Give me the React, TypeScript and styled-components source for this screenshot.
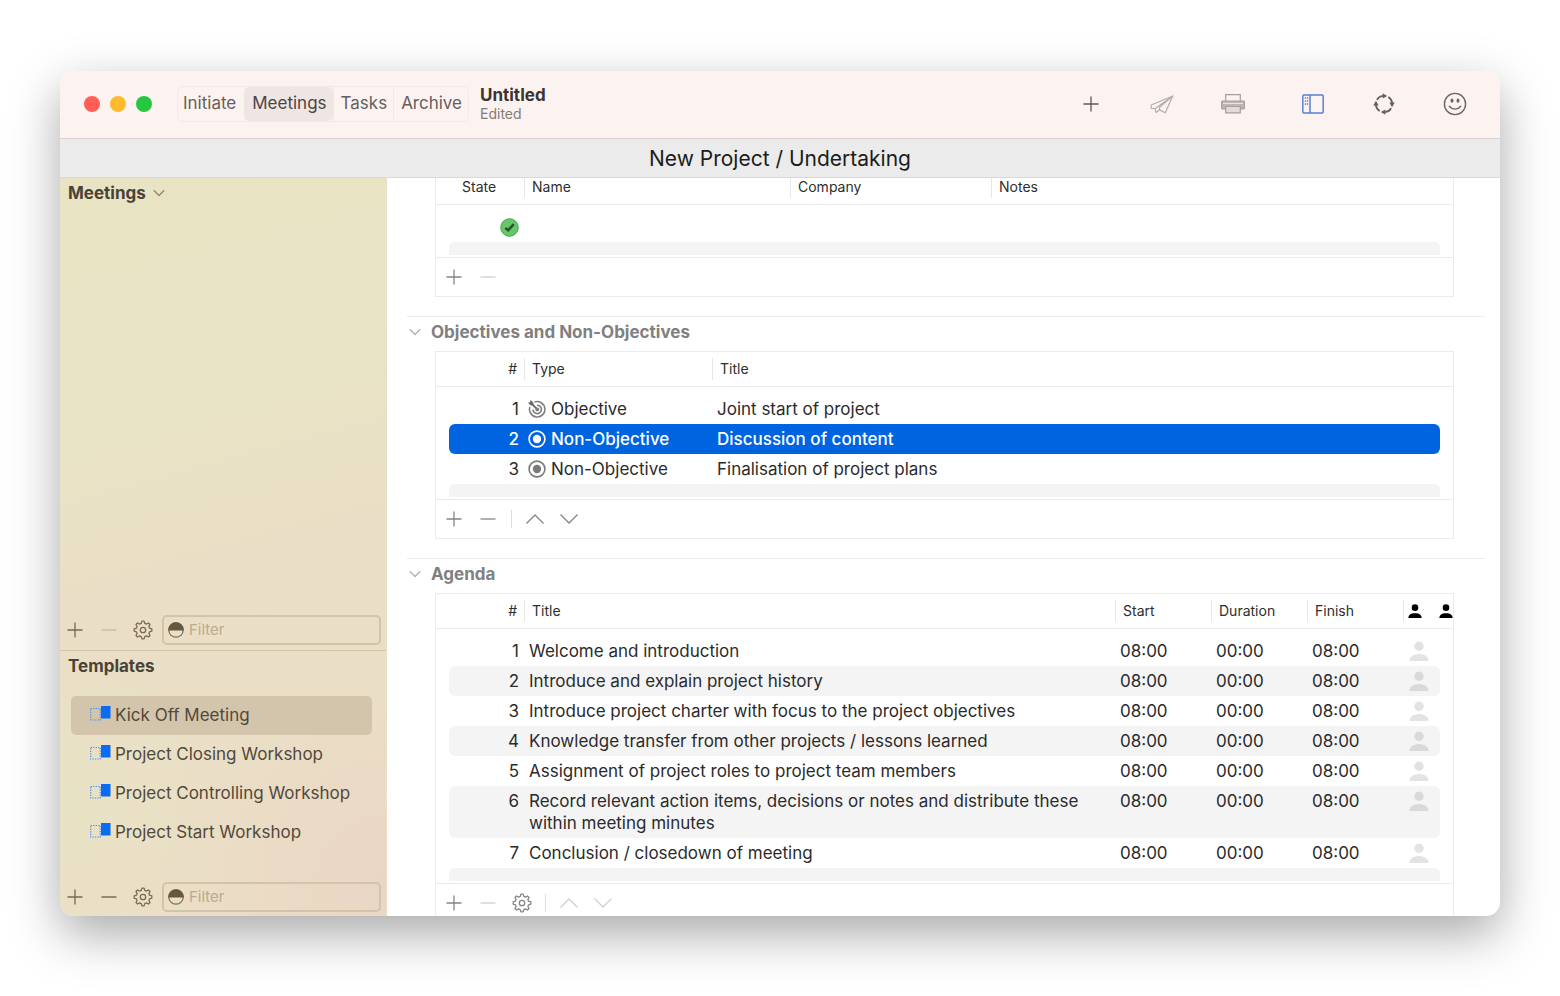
import React, { ReactNode } from "react";
import styled, { createGlobalStyle, css } from "styled-components";

const GlobalStyle = createGlobalStyle`
  *, *::before, *::after { box-sizing: border-box; }
  body {
    margin: 0;
    background: #fff;
    color: #2b2b2b;
    font-family: Inter, "Liberation Sans", sans-serif;
    font-size: 17px;
    line-height: 22px;
  }
  button, input { font: inherit; color: inherit; }
`;

/* ---------- window ---------- */

const Desktop = styled.div`
  height: 100vh;
  min-height: 640px;
  padding: 71px 60px 80px;
  display: flex;
`;

const Window = styled.div`
  flex: 1;
  min-width: 0;
  display: flex;
  flex-direction: column;
  overflow: hidden;
  border-radius: 14px;
  background: #fff;
  box-shadow: 0 18px 50px rgba(0, 0, 0, 0.34);
`;

const TitleBar = styled.header`
  flex: none;
  height: 68px;
  padding: 0 33px 2px 24px;
  display: flex;
  align-items: center;
  background: #fcf3f0;
  border-bottom: 1px solid #d6d1cf;
`;

const TrafficLights = styled.div`
  display: flex;
  gap: 10px;
`;

const Light = styled.button<{ $color: string }>`
  width: 16px;
  height: 16px;
  padding: 0;
  border: 0;
  border-radius: 50%;
  background: ${(p) => p.$color};
`;

const Segments = styled.nav`
  display: flex;
  height: 36px;
  margin-left: 25px;
  border: 1px solid #f3e8e5;
  border-radius: 6px;
  color: #655e5c;
`;

const Segment = styled.button<{ $active?: boolean }>`
  padding: 0 6px 2px 7px;
  border: 0;
  border-left: 1px solid #f3e8e5;
  background: none;
  &:first-child {
    padding: 0 8px 2px 5px;
    border-left: 0;
  }
  ${(p) =>
    p.$active &&
    css`
      background: #efe5e3;
      border-color: #efe5e3;
      border-radius: 5px;
      color: #4b4443;
    `}
`;

const DocTitle = styled.div`
  margin-left: 11px;
  display: flex;
  flex-direction: column;
`;

const DocName = styled.strong`
  font-size: 17px;
  line-height: 20px;
  font-weight: 700;
  color: #3a3433;
`;

const DocState = styled.span`
  font-size: 14px;
  line-height: 18px;
  color: #837b79;
`;

const ToolGroups = styled.div`
  margin-left: auto;
  display: flex;
  gap: 56px;
`;

const ToolGroup = styled.div`
  display: flex;
  gap: 47px;
`;

const IconButton = styled.button<{ $tone?: string; $wide?: boolean }>`
  width: ${(p) => (p.$wide ? 24 : 20)}px;
  height: 24px;
  padding: 0;
  border: 0;
  background: none;
  display: grid;
  place-items: center;
  flex: none;
  color: ${(p) => p.$tone || "#858585"};
  svg { display: block; }
`;

const ProjectBar = styled.h1`
  flex: none;
  height: 39px;
  margin: 0;
  background: #ebebeb;
  border-bottom: 1px solid #d9d9d9;
  text-align: center;
  font-size: 21px;
  line-height: 39px;
  font-weight: 400;
  color: #1c1c1c;
`;

const Columns = styled.div`
  flex: 1;
  min-height: 0;
  display: grid;
  grid-template-columns: 327px minmax(0, 1fr);
`;

/* ---------- sidebar ---------- */

const Sidebar = styled.aside`
  min-height: 0;
  display: flex;
  flex-direction: column;
  border-right: 1px solid #e6dfca;
  background:
    radial-gradient(circle at 0% 84%, rgba(232, 227, 196, 0.8), rgba(232, 227, 196, 0) 22%),
    radial-gradient(circle at 100% 96%, rgba(234, 213, 197, 0.9), rgba(234, 213, 197, 0) 30%),
    linear-gradient(165deg, #e8e4c3 0%, #e9e3c5 34%, #eadfc6 52%, #ebdfc7 100%);
  color: #51493b;
`;

const SidePane = styled.section<{ $grow?: boolean }>`
  display: flex;
  flex-direction: column;
  ${(p) =>
    p.$grow ? "flex: 1; min-height: 0; padding-bottom: 1px;" : "flex: none; border-top: 1px solid #cfc5a9;"}
`;

const SideHeading = styled.h2`
  margin: 0;
  padding: 4px 8px;
  display: flex;
  align-items: center;
  gap: 7px;
  font-size: 17px;
  line-height: 22px;
  font-weight: 700;
  color: #4a4237;
  svg { color: #8f8670; }
`;

const SideTools = styled.form`
  margin-top: auto;
  padding: 0 5px 4px;
  height: 34px;
  display: flex;
  align-items: center;
  gap: 14px;
`;

const FilterField = styled.label`
  flex: 1;
  min-width: 0;
  height: 30px;
  margin-left: -5px;
  padding: 0 4px;
  display: flex;
  align-items: center;
  gap: 5px;
  border: 2px solid #d0c5a9;
  border-radius: 5px;
`;

const FilterInput = styled.input.attrs({ type: "text", placeholder: "Filter" })`
  flex: 1;
  min-width: 0;
  padding: 0;
  border: 0;
  outline: 0;
  background: none;
  font-size: 15px;
  line-height: 20px;
  &::placeholder { color: #b9ab8d; opacity: 1; }
`;

const TemplateList = styled.ul`
  list-style: none;
  margin: 0;
  padding: 15px 14px 30px 11px;
`;

const TemplateItem = styled.li<{ $selected?: boolean }>`
  height: 39px;
  padding: 0 0 2px 19px;
  display: flex;
  align-items: center;
  gap: 4px;
  border-radius: 5px;
  white-space: nowrap;
  background: ${(p) => (p.$selected ? "#d3c5ac" : "none")};
`;

/* ---------- main ---------- */

const Main = styled.main`
  min-width: 0;
  min-height: 0;
  overflow: hidden;
  padding: 0 15px 0 20px;
`;

const Scrolled = styled.div`
  margin-top: -9px;
`;

const Section = styled.section`
  & + & {
    margin-top: 19px;
    border-top: 1px solid #ececec;
  }
`;

const SectionHeading = styled.h2`
  margin: 0;
  height: 34px;
  padding: 0 0 4px 2px;
  display: flex;
  align-items: center;
  gap: 10px;
  font-size: 17px;
  line-height: 22px;
  font-weight: 700;
  color: #808080;
  svg { color: #b0b0b0; }
`;

const Panel = styled.div`
  margin: 0 31px 0 28px;
  border: 1px solid #ebebeb;
  overflow: hidden;
`;

const DataTable = styled.table<{ $cols: string; $headCols?: string }>`
  display: block;
  thead, tbody { display: block; }
  thead tr {
    display: grid;
    grid-template-columns: ${(p) => p.$headCols || p.$cols};
    align-items: center;
    height: 35px;
    padding-left: 13px;
    padding-right: ${(p) => (p.$headCols ? 0 : 13)}px;
    border-bottom: 1px solid #ebebeb;
  }
  tbody { padding: 7px 13px 2px; }
  tbody tr {
    display: grid;
    grid-template-columns: ${(p) => p.$cols};
  }
`;

const Th = styled.th<{ $rule?: boolean; $align?: string; $left?: number }>`
  height: 22px;
  padding: 0 7px 0 ${(p) => p.$left ?? 7}px;
  border-left: ${(p) => (p.$rule ? "1px solid #e6e6e6" : "0")};
  font-size: 14px;
  line-height: 22px;
  font-weight: 400;
  text-align: ${(p) => p.$align || "left"};
  color: #2e2e2e;
  white-space: nowrap;
  svg { display: block; margin-top: 4px; color: #000; }
`;

const Row = styled.tr<{ $striped?: boolean; $selected?: boolean }>`
  border-radius: 6px;
  background: ${(p) => (p.$selected ? "#0064e1" : p.$striped ? "#f4f4f5" : "none")};
  color: ${(p) => (p.$selected ? "#fff" : "#2b2b2b")};
  font-weight: ${(p) => (p.$selected ? 500 : 400)};
`;

const Td = styled.td<{ $align?: string }>`
  min-height: 30px;
  padding: 4px 5px;
  text-align: ${(p) => p.$align || "left"};
`;

const IconTd = styled(Td)`
  display: flex;
  justify-content: ${(p) => (p.$align === "right" ? "flex-end" : "flex-start")};
  align-items: center;
  gap: 5px;
  padding-left: 4px;
`;

const PersonTd = styled(Td)<{ $dark?: boolean }>`
  padding: 5px 6px;
  color: ${(p) => (p.$dark ? "#d9d9d9" : "#e3e3e3")};
  svg { display: block; }
`;

const Filler = styled.tr`
  height: 13px;
  background: #f4f4f5;
  border-radius: 5px 5px 0 0;
`;

const PanelTools = styled.div`
  height: 39px;
  padding: 0 8px;
  display: flex;
  align-items: center;
  gap: 14px;
  border-top: 1px solid #ebebeb;
`;

const Divider = styled.span`
  width: 1px;
  height: 18px;
  background: #dedede;
  margin: 0 -1px;
`;

/* ---------- icons ---------- */

const Svg = ({ w, h = w, sw = 1.3, children }: { w: number; h?: number; sw?: number; children: ReactNode }) => (
  <svg width={w} height={h} viewBox={`0 0 ${w} ${h}`} fill="none" stroke="currentColor" strokeWidth={sw} aria-hidden="true">
    {children}
  </svg>
);

const Plus = () => <Svg w={16}><path d="M8 .5v15M.5 8h15" /></Svg>;
const Minus = () => <Svg w={16}><path d="M.5 8h15" /></Svg>;
const Up = () => <Svg w={18} h={12}><path d="M.5 10.500 9 2l8.500 8.500" /></Svg>;
const Down = () => <Svg w={18} h={12}><path d="M.5 1.500 9 10l8.500-8.500" /></Svg>;
const SmallDown = () => <Svg w={12} h={8}><path d="M.8 1.200 6 6.500l5.200-5.300" /></Svg>;

const gearPath = (() => {
  const pts: string[] = [];
  const teeth = 8;
  for (let i = 0; i < teeth; i++) {
    const a = (i / teeth) * Math.PI * 2 - Math.PI / 2;
    [[-0.27, 6.8], [-0.12, 8.9], [0.12, 8.9], [0.27, 6.8]].forEach(([d, r]) => {
      pts.push(`${(10 + Math.cos(a + d) * r).toFixed(2)} ${(10 + Math.sin(a + d) * r).toFixed(2)}`);
    });
  }
  return `M${pts.join("L")}Z`;
})();

const Gear = () => (
  <Svg w={20}>
    <path d={gearPath} strokeLinejoin="round" />
    <circle cx="10" cy="10" r="2.700" />
  </Svg>
);

const HalfDisc = () => (
  <Svg w={16} sw={1.2}>
    <circle cx="8" cy="8" r="7.200" stroke="#7b6c50" />
    <path d="M.8 8a7.200 7.200 0 0 1 14.400 0z" fill="#66583e" stroke="#66583e" />
  </Svg>
);

const TemplateIcon = () => (
  <Svg w={21} h={17}>
    <path d="M.7 2.500h9.500v11.500H.7z" stroke="#4b8df0" strokeWidth="1.200" strokeDasharray="1.300 1.200" />
    <path d="M11 0h9.500v12.500H11z" fill="#0a6cf0" stroke="none" />
  </Svg>
);

const Check = () => (
  <Svg w={19}>
    <circle cx="9.500" cy="9.500" r="8.800" fill="#68c56b" stroke="#4fa554" strokeWidth="1" />
    <path d="M5.300 10 8.200 12.200 13.800 6.200" stroke="#1f5a27" strokeWidth="2.600" />
  </Svg>
);

const Target = ({ arrow }: { arrow?: boolean }) =>
  arrow ? (
    <Svg w={18} sw={1.6}>
      <path d="M6.500 2.100A7.700 7.700 0 1 1 1.900 6.900" stroke="#808080" />
      <path d="M9 5.200A4.200 4.200 0 1 1 5 9.400" stroke="#808080" />
      <path d="M2 2l7.300 7.400" stroke="#6a6a6a" strokeWidth="1.800" />
      <path d="M0 2.800 2 2.200 2.600 0 5.400 2.800v2.600H2.800z" fill="#6a6a6a" stroke="none" />
      <circle cx="9.300" cy="9.400" r="1.900" fill="#808080" stroke="none" />
    </Svg>
  ) : (
    <Svg w={18} sw={1.6}>
      <circle cx="9" cy="9" r="7.900" />
      <circle cx="9" cy="9" r="4.200" fill="currentColor" stroke="none" />
    </Svg>
  );

const TypeMark = styled.span<{ $selected?: boolean }>`
  display: flex;
  flex: none;
  color: ${(p) => (p.$selected ? "#fff" : "#7a7a7a")};
`;

const Person = ({ size }: { size: number }) => (
  <svg width={size} height={size} viewBox="0 0 20 20" fill="currentColor" aria-hidden="true">
    <circle cx="10" cy="5.200" r="4.700" />
    <path d="M.5 20c0-3.800 2.500-5.400 5.500-6.300 2.300-.8 5.700-.8 8 0 3 .9 5.500 2.500 5.500 6.300z" />
  </svg>
);

const PaperPlane = () => (
  <Svg w={24} sw={1.2}>
    <path d="M22.800 4 1.200 13v3.300l4 .3 1 3.900 3.300-2.600 5.700 2.900z" strokeLinejoin="round" />
    <path d="M22.800 4 5.200 16.600M22.800 4 9.500 15.200v2.700" />
  </Svg>
);

const Printer = () => (
  <Svg w={24} sw={1.2}>
    <path d="M4.700 9V2.700h14.600V9" />
    <path d="M1.500 9h21a.8.8 0 0 1 .8.800v6.400a.8.8 0 0 1-.8.800H1.500a.8.8 0 0 1-.8-.8V9.800A.8.8 0 0 1 1.500 9z" fill="#bdb6b4" />
    <path d="M2 11.500h20" stroke="#ece4e2" />
    <path d="M4.700 14.500h14.600v6.300H4.700z" fill="#e3dbd9" />
  </Svg>
);

const PanelIcon = () => (
  <Svg w={24} h={20} sw={1.5}>
    <rect x="1.800" y=".9" width="20.400" height="18" rx="1" />
    <path d="M9 1v18" />
    <path d="M3.800 4h3.400M3.800 7h3.400M3.800 10h3.400" strokeDasharray="1.400 .7" strokeWidth="1.300" />
  </Svg>
);

const Cycle = () => (
  <Svg w={22} sw={1.8}>
    {[0, 90, 180, 270].map((a) => (
      <g key={a} transform={`rotate(${a} 11 11)`}>
        <path d="M3.900 6.700A8.300 8.300 0 0 1 9.800 2.800" />
        <path d="M9.600.2 14.200 3 9.600 5.600z" fill="currentColor" stroke="none" />
      </g>
    ))}
  </Svg>
);

const Smile = () => (
  <Svg w={24} sw={1.4}>
    <circle cx="12" cy="12" r="10.600" />
    <ellipse cx="9" cy="8.700" rx="1.500" ry="2.100" fill="currentColor" stroke="none" />
    <ellipse cx="15" cy="8.700" rx="1.500" ry="2.100" fill="currentColor" stroke="none" />
    <path d="M6.300 14.300c3 3.700 8.400 3.700 11.400 0" strokeLinecap="round" />
  </Svg>
);

/* ---------- data ---------- */

const templates = ["Kick Off Meeting", "Project Closing Workshop", "Project Controlling Workshop", "Project Start Workshop"];

const objectives = [
  { type: "Objective", title: "Joint start of project" },
  { type: "Non-Objective", title: "Discussion of content" },
  { type: "Non-Objective", title: "Finalisation of project plans" },
];

const agenda = [
  "Welcome and introduction",
  "Introduce and explain project history",
  "Introduce project charter with focus to the project objectives",
  "Knowledge transfer from other projects / lessons learned",
  "Assignment of project roles to project team members",
  "Record relevant action items, decisions or notes and distribute these within meeting minutes",
  "Conclusion / closedown of meeting",
];

const FAINT = "#cfcfcf";

const FilterRow = ({ name, canRemove }: { name: string; canRemove?: boolean }) => (
  <SideTools onSubmit={(e) => e.preventDefault()}>
    <IconButton type="button" aria-label={`Add ${name}`} $tone="#75694f"><Plus /></IconButton>
    <IconButton type="button" aria-label={`Remove ${name}`} $tone={canRemove ? "#7a6d54" : "#c6b999"}><Minus /></IconButton>
    <IconButton type="button" aria-label={`${name} options`} $tone="#7a6d54"><Gear /></IconButton>
    <FilterField>
      <HalfDisc />
      <FilterInput aria-label={`Filter ${name}`} />
    </FilterField>
  </SideTools>
);

export default function App() {
  return (
    <Desktop>
      <GlobalStyle />
      <Window>
        <TitleBar>
          <TrafficLights>
            <Light $color="#ff5f57" aria-label="Close" />
            <Light $color="#febb2e" aria-label="Minimise" />
            <Light $color="#28c740" aria-label="Zoom" />
          </TrafficLights>
          <Segments>
            <Segment>Initiate</Segment>
            <Segment $active>Meetings</Segment>
            <Segment>Tasks</Segment>
            <Segment>Archive</Segment>
          </Segments>
          <DocTitle>
            <DocName>Untitled</DocName>
            <DocState>Edited</DocState>
          </DocTitle>
          <ToolGroups>
            <ToolGroup>
              <IconButton $wide aria-label="Add" $tone="#5d5654"><Plus /></IconButton>
              <IconButton $wide aria-label="Send" $tone="#b5adab"><PaperPlane /></IconButton>
              <IconButton $wide aria-label="Print" $tone="#a59d9b"><Printer /></IconButton>
            </ToolGroup>
            <ToolGroup>
              <IconButton $wide aria-label="Toggle sidebar" $tone="#5a7fd6"><PanelIcon /></IconButton>
              <IconButton $wide aria-label="Sync" $tone="#655e5c"><Cycle /></IconButton>
              <IconButton $wide aria-label="Feedback" $tone="#6d6563"><Smile /></IconButton>
            </ToolGroup>
          </ToolGroups>
        </TitleBar>
        <ProjectBar>New Project / Undertaking</ProjectBar>
        <Columns>
          <Sidebar>
            <SidePane $grow>
              <SideHeading>Meetings <SmallDown /></SideHeading>
              <FilterRow name="meetings" />
            </SidePane>
            <SidePane>
              <SideHeading>Templates</SideHeading>
              <TemplateList>
                {templates.map((t, i) => (
                  <TemplateItem key={t} $selected={i === 0}>
                    <TemplateIcon />
                    {t}
                  </TemplateItem>
                ))}
              </TemplateList>
              <FilterRow name="templates" canRemove />
            </SidePane>
          </Sidebar>
          <Main>
            <Scrolled>
              <Section>
                <Panel>
                  <DataTable $cols="75px 266px 201px minmax(0, 1fr)">
                    <thead>
                      <tr>
                        <Th $left={13}>State</Th>
                        <Th $rule>Name</Th>
                        <Th $rule>Company</Th>
                        <Th $rule>Notes</Th>
                      </tr>
                    </thead>
                    <tbody>
                      <Row>
                        <IconTd $align="right"><Check /></IconTd>
                        <Td />
                        <Td />
                        <Td />
                      </Row>
                      <Filler />
                    </tbody>
                  </DataTable>
                  <PanelTools>
                    <IconButton aria-label="Add participant"><Plus /></IconButton>
                    <IconButton aria-label="Remove participant" $tone={FAINT}><Minus /></IconButton>
                  </PanelTools>
                </Panel>
              </Section>
              <Section>
                <SectionHeading><SmallDown />Objectives and Non-Objectives</SectionHeading>
                <Panel>
                  <DataTable $cols="75px 188px minmax(0, 1fr)">
                    <thead>
                      <tr>
                        <Th $align="right">#</Th>
                        <Th $rule>Type</Th>
                        <Th $rule>Title</Th>
                      </tr>
                    </thead>
                    <tbody>
                      {objectives.map((o, i) => (
                        <Row key={o.title} $selected={i === 1}>
                          <Td $align="right">{i + 1}</Td>
                          <IconTd>
                            <TypeMark $selected={i === 1}><Target arrow={i === 0} /></TypeMark>
                            {o.type}
                          </IconTd>
                          <Td>{o.title}</Td>
                        </Row>
                      ))}
                      <Filler />
                    </tbody>
                  </DataTable>
                  <PanelTools>
                    <IconButton aria-label="Add objective"><Plus /></IconButton>
                    <IconButton aria-label="Remove objective"><Minus /></IconButton>
                    <Divider />
                    <IconButton aria-label="Move up"><Up /></IconButton>
                    <IconButton aria-label="Move down"><Down /></IconButton>
                  </PanelTools>
                </Panel>
              </Section>
              <Section>
                <SectionHeading><SmallDown />Agenda</SectionHeading>
                <Panel>
                  <DataTable
                    $cols="75px minmax(0, 1fr) 96px 96px 96px 37px"
                    $headCols="75px minmax(0, 1fr) 96px 96px 96px 32px 18px"
                  >
                    <thead>
                      <tr>
                        <Th $align="right">#</Th>
                        <Th $rule>Title</Th>
                        <Th $rule>Start</Th>
                        <Th $rule>Duration</Th>
                        <Th $rule>Finish</Th>
                        <Th $rule $left={4} aria-label="Responsible"><Person size={14} /></Th>
                        <Th $left={4} aria-label="Participants"><Person size={14} /></Th>
                      </tr>
                    </thead>
                    <tbody>
                      {agenda.map((title, i) => (
                        <Row key={title} $striped={i % 2 === 1}>
                          <Td $align="right">{i + 1}</Td>
                          <Td>{title}</Td>
                          <Td>08:00</Td>
                          <Td>00:00</Td>
                          <Td>08:00</Td>
                          <PersonTd $dark={i % 2 === 1}><Person size={20} /></PersonTd>
                        </Row>
                      ))}
                      <Filler />
                    </tbody>
                  </DataTable>
                  <PanelTools>
                    <IconButton aria-label="Add agenda item"><Plus /></IconButton>
                    <IconButton aria-label="Remove agenda item" $tone={FAINT}><Minus /></IconButton>
                    <IconButton aria-label="Agenda options"><Gear /></IconButton>
                    <Divider />
                    <IconButton aria-label="Move up" $tone={FAINT}><Up /></IconButton>
                    <IconButton aria-label="Move down" $tone={FAINT}><Down /></IconButton>
                  </PanelTools>
                </Panel>
              </Section>
            </Scrolled>
          </Main>
        </Columns>
      </Window>
    </Desktop>
  );
}
